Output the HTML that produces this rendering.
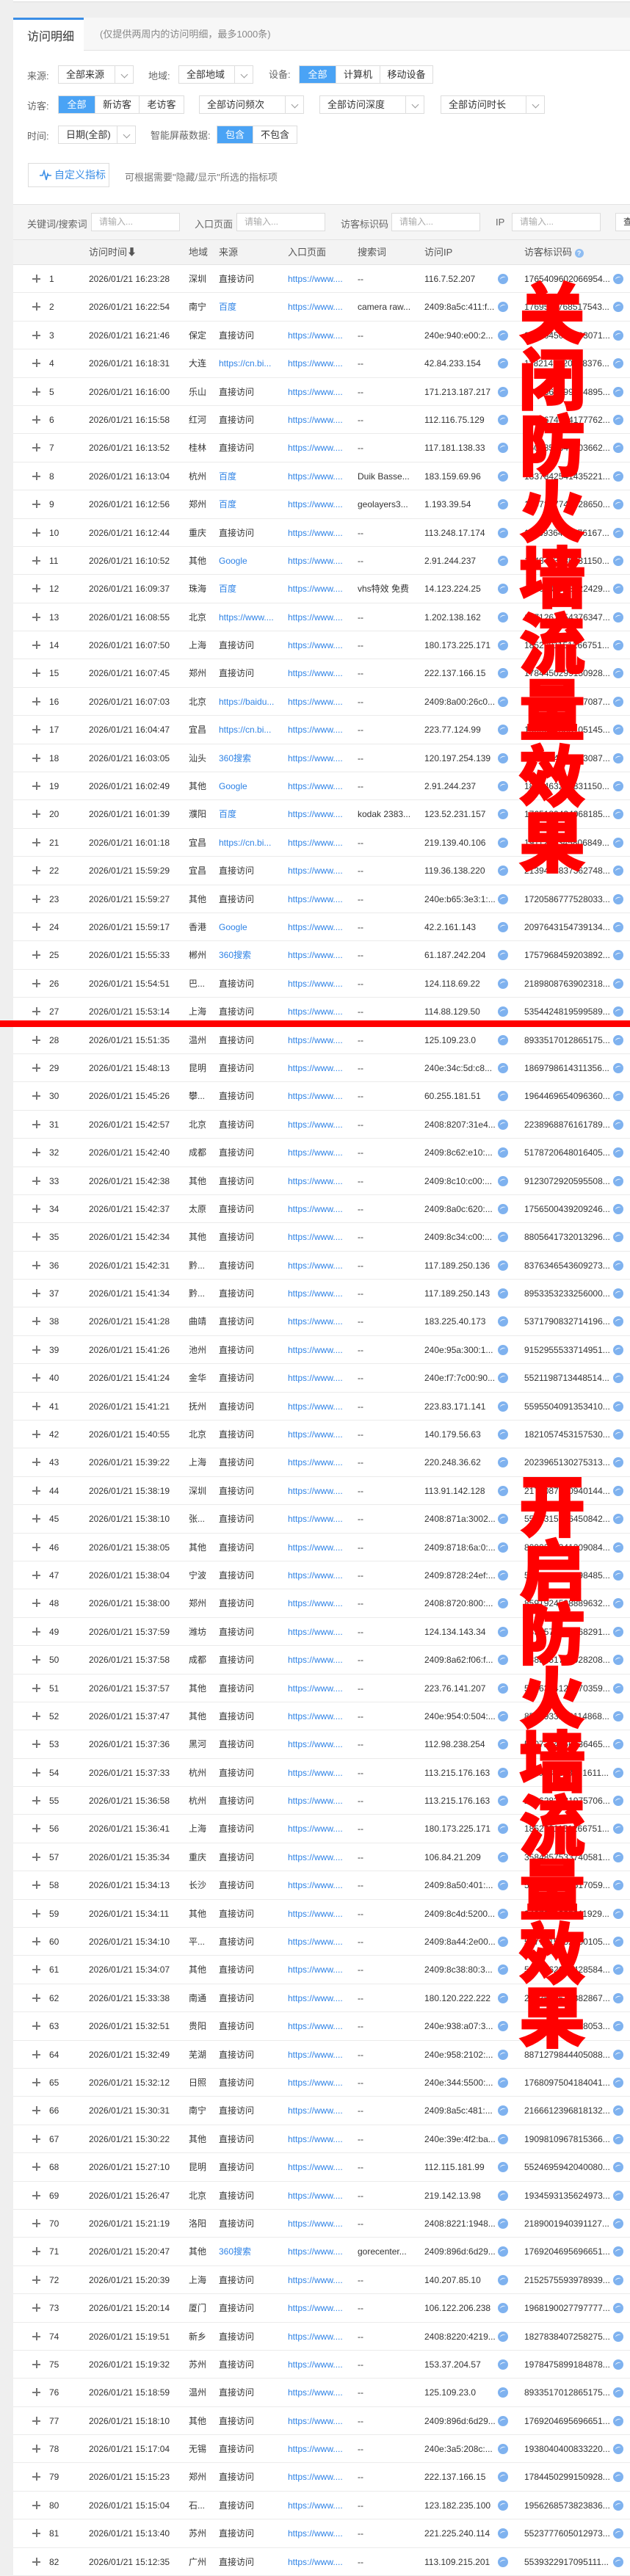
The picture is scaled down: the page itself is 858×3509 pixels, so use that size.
<!DOCTYPE html>
<html><head><meta charset="utf-8">
<style>
*{margin:0;padding:0;box-sizing:border-box}
body{width:858px;height:3497px;overflow:hidden;background:#efefef;font-family:"Liberation Sans","Noto Sans CJK SC",sans-serif;font-size:12px;color:#333;position:relative}
.abs{position:absolute}
.top{left:18px;top:0;width:840px;height:3px;background:#fff;border-bottom:1px solid #ddd}
.tabbar{left:18px;top:24px;width:840px;height:45px;background:#f7f7f7;border-bottom:1px solid #e3e3e3}
.tab{left:18px;top:24px;width:96px;height:45px;background:#fff;border-top:3px solid #3a8ee6;font-size:16px;color:#333;padding:9px 0 0 19px}
.tabnote{left:136px;top:24px;line-height:45px;color:#888;font-size:13px}
.panel{left:18px;top:69px;width:840px;height:210px;background:#fff;border-bottom:1px solid #e3e3e3}
.lbl{color:#666;font-size:13px}
.sel{height:25px;border:1px solid #ddd;background:#fff;font-size:13px;line-height:23px;padding-left:10px;color:#333}
.sel:after{content:"";position:absolute;right:0;top:0;width:24px;height:23px;border-left:1px solid #ddd;background:linear-gradient(#fff,#fff)}
.arr{position:absolute;right:8px;top:8px;width:7px;height:7px;border-right:1px solid #999;border-bottom:1px solid #999;transform:rotate(45deg);z-index:2}
.grp{height:25px;border:1px solid #ddd;background:#fff;display:flex;font-size:13px;line-height:23px}
.grp span{text-align:center;border-right:1px solid #ddd}
.grp span:last-child{border-right:0}
.grp .on{background:#4aa3f5;color:#fff}
.btn{left:38px;top:222px;width:111px;height:33px;border:1px solid #ddd;background:#fff;color:#3a8ee6;font-size:14px;line-height:31px;padding-left:35px}
.srch{left:18px;top:279px;width:840px;height:48px;background:#f5f5f5;border-bottom:1px solid #e3e3e3}
.inp{height:25px;border:1px solid #ddd;background:#fff;color:#aaa;font-size:12px;line-height:23px;padding-left:10px;width:121px}
.head{left:18px;top:327px;width:840px;height:34px;background:#f3f3f3;border-bottom:1px solid #e3e3e3}
.head span{position:absolute;top:0;line-height:34px;font-size:13px;color:#555}
.rows{left:18px;top:361px;width:840px;background:#fff}
.r{position:relative;height:38.4px;border-bottom:1px solid #ebebeb}
.r>*{position:absolute;top:0;line-height:38px;white-space:nowrap}
xp{left:26px;top:13px!important;width:11px;height:11px}
xp:before{content:"";position:absolute;left:0;top:5px;width:11px;height:2px;background:#777}
xp:after{content:"";position:absolute;left:5px;top:0;width:2px;height:11px;background:#777}
xn{left:49px}
xd{left:103px}
xg{left:239px}
xs{left:280px}
xs.b{color:#2f83e6}
xe{left:374px;color:#2f83e6}
xk{left:469px}
xi{left:560px}
xc,xy{top:12px!important;width:14px;height:14px;border-radius:50%;background:#7fb2ef}
xc{left:660px}
xy{left:817px}
xc:after,xy:after{content:"";position:absolute;left:3px;top:4px;width:8px;height:4px;border-top:1.5px solid #fff;border-radius:50% 50% 0 0;transform:rotate(-20deg)}
xv{left:696px}
.red{background:#ff0000;left:0;top:1390px;width:858px;height:9px}
.big{color:#ff0000;font-family:"Noto Sans CJK SC","WenQuanYi Zen Hei",sans-serif;font-weight:900;font-size:90px;width:92px;text-align:center;-webkit-text-stroke:2px #ff0000}
</style></head><body>
<div class="abs top"></div>
<div class="abs tabbar"></div>
<div class="abs tab">访问明细</div>
<div class="abs tabnote">(仅提供两周内的访问明细，最多1000条)</div>
<div class="abs panel"></div>

<div class="abs lbl" style="left:37px;top:93px">来源:</div>
<div class="abs sel" style="left:79px;top:89px;width:103px">全部来源<i class="arr"></i></div>
<div class="abs lbl" style="left:202px;top:93px">地域:</div>
<div class="abs sel" style="left:243px;top:89px;width:102px">全部地域<i class="arr"></i></div>
<div class="abs lbl" style="left:366px;top:91px">设备:</div>
<div class="abs grp" style="left:407px;top:89px;width:183px"><span class="on" style="width:50px">全部</span><span style="width:60px">计算机</span><span style="width:71px">移动设备</span></div>

<div class="abs lbl" style="left:37px;top:134px">访客:</div>
<div class="abs grp" style="left:79px;top:130px;width:172px"><span class="on" style="width:50px">全部</span><span style="width:60px">新访客</span><span style="width:60px">老访客</span></div>
<div class="abs sel" style="left:271px;top:130px;width:143px">全部访问频次<i class="arr"></i></div>
<div class="abs sel" style="left:435px;top:130px;width:143px">全部访问深度<i class="arr"></i></div>
<div class="abs sel" style="left:600px;top:130px;width:142px">全部访问时长<i class="arr"></i></div>

<div class="abs lbl" style="left:37px;top:175px">时间:</div>
<div class="abs sel" style="left:79px;top:171px;width:106px">日期(全部)<i class="arr"></i></div>
<div class="abs lbl" style="left:205px;top:174px">智能屏蔽数据:</div>
<div class="abs grp" style="left:295px;top:171px;width:110px"><span class="on" style="width:49px">包含</span><span style="width:59px">不包含</span></div>

<div class="abs btn"><svg class="abs" style="left:15px;top:8px" width="16" height="16" viewBox="0 0 16 16"><path d="M0 8h4l2-6 3 12 2-8 1 2h4" fill="none" stroke="#3a8ee6" stroke-width="1.6"/></svg>自定义指标</div>
<div class="abs" style="left:170px;top:231px;color:#777;font-size:13px">可根据需要"隐藏/显示"所选的指标项</div>

<div class="abs srch"></div>
<div class="abs lbl" style="left:37px;top:295px">关键词/搜索词</div>
<div class="abs inp" style="left:124px;top:290px">请输入...</div>
<div class="abs lbl" style="left:265px;top:295px">入口页面</div>
<div class="abs inp" style="left:322px;top:290px">请输入...</div>
<div class="abs lbl" style="left:464px;top:295px">访客标识码</div>
<div class="abs inp" style="left:533px;top:290px">请输入...</div>
<div class="abs lbl" style="left:675px;top:295px">IP</div>
<div class="abs inp" style="left:697px;top:290px">请输入...</div>
<div class="abs inp" style="left:838px;top:290px;width:40px;color:#333">查</div>

<div class="abs head">
<span style="left:103px">访问时间⬇</span><span style="left:239px">地域</span><span style="left:280px">来源</span><span style="left:374px">入口页面</span><span style="left:469px">搜索词</span><span style="left:560px">访问IP</span><span style="left:696px">访客标识码 <b style="display:inline-block;width:12px;height:12px;border-radius:50%;background:#8fbdf2;color:#fff;font-size:9px;line-height:12px;text-align:center;vertical-align:middle">?</b></span>
</div>

<div class="abs rows">
<div class="r"><xp></xp><xn>1</xn><xd>2026/01/21 16:23:28</xd><xg>深圳</xg><xs>直接访问</xs><xe>https://www....</xe><xk>--</xk><xi>116.7.52.207</xi><xc></xc><xv>1765409602066954...</xv><xy></xy></div>
<div class="r"><xp></xp><xn>2</xn><xd>2026/01/21 16:22:54</xd><xg>南宁</xg><xs class="b">百度</xs><xe>https://www....</xe><xk>camera raw...</xk><xi>2409:8a5c:411:f...</xi><xc></xc><xv>1769511768517543...</xv><xy></xy></div>
<div class="r"><xp></xp><xn>3</xn><xd>2026/01/21 16:21:46</xd><xg>保定</xg><xs>直接访问</xs><xe>https://www....</xe><xk>--</xk><xi>240e:940:e00:2...</xi><xc></xc><xv>2143045062493071...</xv><xy></xy></div>
<div class="r"><xp></xp><xn>4</xn><xd>2026/01/21 16:18:31</xd><xg>大连</xg><xs class="b">https://cn.bi...</xs><xe>https://www....</xe><xk>--</xk><xi>42.84.233.154</xi><xc></xc><xv>1182149420248376...</xv><xy></xy></div>
<div class="r"><xp></xp><xn>5</xn><xd>2026/01/21 16:16:00</xd><xg>乐山</xg><xs>直接访问</xs><xe>https://www....</xe><xk>--</xk><xi>171.213.187.217</xi><xc></xc><xv>1726361699034895...</xv><xy></xy></div>
<div class="r"><xp></xp><xn>6</xn><xd>2026/01/21 16:15:58</xd><xg>红河</xg><xs>直接访问</xs><xe>https://www....</xe><xk>--</xk><xi>112.116.75.129</xi><xc></xc><xv>5962674104177762...</xv><xy></xy></div>
<div class="r"><xp></xp><xn>7</xn><xd>2026/01/21 16:13:52</xd><xg>桂林</xg><xs>直接访问</xs><xe>https://www....</xe><xk>--</xk><xi>117.181.138.33</xi><xc></xc><xv>4604850643203662...</xv><xy></xy></div>
<div class="r"><xp></xp><xn>8</xn><xd>2026/01/21 16:13:04</xd><xg>杭州</xg><xs class="b">百度</xs><xe>https://www....</xe><xk>Duik Basse...</xk><xi>183.159.69.96</xi><xc></xc><xv>1837842541435221...</xv><xy></xy></div>
<div class="r"><xp></xp><xn>9</xn><xd>2026/01/21 16:12:56</xd><xg>郑州</xg><xs class="b">百度</xs><xe>https://www....</xe><xk>geolayers3...</xk><xi>1.193.39.54</xi><xc></xc><xv>1997217747328650...</xv><xy></xy></div>
<div class="r"><xp></xp><xn>10</xn><xd>2026/01/21 16:12:44</xd><xg>重庆</xg><xs>直接访问</xs><xe>https://www....</xe><xk>--</xk><xi>113.248.17.174</xi><xc></xc><xv>1196936434576167...</xv><xy></xy></div>
<div class="r"><xp></xp><xn>11</xn><xd>2026/01/21 16:10:52</xd><xg>其他</xg><xs class="b">Google</xs><xe>https://www....</xe><xk>--</xk><xi>2.91.244.237</xi><xc></xc><xv>1848463230831150...</xv><xy></xy></div>
<div class="r"><xp></xp><xn>12</xn><xd>2026/01/21 16:09:37</xd><xg>珠海</xg><xs class="b">百度</xs><xe>https://www....</xe><xk>vhs特效 免费</xk><xi>14.123.224.25</xi><xc></xc><xv>1690305538422429...</xv><xy></xy></div>
<div class="r"><xp></xp><xn>13</xn><xd>2026/01/21 16:08:55</xd><xg>北京</xg><xs class="b">https://www....</xs><xe>https://www....</xe><xk>--</xk><xi>1.202.138.162</xi><xc></xc><xv>1871267354376347...</xv><xy></xy></div>
<div class="r"><xp></xp><xn>14</xn><xd>2026/01/21 16:07:50</xd><xg>上海</xg><xs>直接访问</xs><xe>https://www....</xe><xk>--</xk><xi>180.173.225.171</xi><xc></xc><xv>1852281151266751...</xv><xy></xy></div>
<div class="r"><xp></xp><xn>15</xn><xd>2026/01/21 16:07:45</xd><xg>郑州</xg><xs>直接访问</xs><xe>https://www....</xe><xk>--</xk><xi>222.137.166.15</xi><xc></xc><xv>1784450299150928...</xv><xy></xy></div>
<div class="r"><xp></xp><xn>16</xn><xd>2026/01/21 16:07:03</xd><xg>北京</xg><xs class="b">https://baidu...</xs><xe>https://www....</xe><xk>--</xk><xi>2409:8a00:26c0...</xi><xc></xc><xv>5022613460617087...</xv><xy></xy></div>
<div class="r"><xp></xp><xn>17</xn><xd>2026/01/21 16:04:47</xd><xg>宜昌</xg><xs class="b">https://cn.bi...</xs><xe>https://www....</xe><xk>--</xk><xi>223.77.124.99</xi><xc></xc><xv>1900232838105145...</xv><xy></xy></div>
<div class="r"><xp></xp><xn>18</xn><xd>2026/01/21 16:03:05</xd><xg>汕头</xg><xs class="b">360搜索</xs><xe>https://www....</xe><xk>--</xk><xi>120.197.254.139</xi><xc></xc><xv>1250454187203087...</xv><xy></xy></div>
<div class="r"><xp></xp><xn>19</xn><xd>2026/01/21 16:02:49</xd><xg>其他</xg><xs class="b">Google</xs><xe>https://www....</xe><xk>--</xk><xi>2.91.244.237</xi><xc></xc><xv>1848463230831150...</xv><xy></xy></div>
<div class="r"><xp></xp><xn>20</xn><xd>2026/01/21 16:01:39</xd><xg>濮阳</xg><xs class="b">百度</xs><xe>https://www....</xe><xk>kodak 2383...</xk><xi>123.52.231.157</xi><xc></xc><xv>1765180424068185...</xv><xy></xy></div>
<div class="r"><xp></xp><xn>21</xn><xd>2026/01/21 16:01:18</xd><xg>宜昌</xg><xs class="b">https://cn.bi...</xs><xe>https://www....</xe><xk>--</xk><xi>219.139.40.106</xi><xc></xc><xv>1911264345806849...</xv><xy></xy></div>
<div class="r"><xp></xp><xn>22</xn><xd>2026/01/21 15:59:29</xd><xg>宜昌</xg><xs>直接访问</xs><xe>https://www....</xe><xk>--</xk><xi>119.36.138.220</xi><xc></xc><xv>2139406837362748...</xv><xy></xy></div>
<div class="r"><xp></xp><xn>23</xn><xd>2026/01/21 15:59:27</xd><xg>其他</xg><xs>直接访问</xs><xe>https://www....</xe><xk>--</xk><xi>240e:b65:3e3:1:...</xi><xc></xc><xv>1720586777528033...</xv><xy></xy></div>
<div class="r"><xp></xp><xn>24</xn><xd>2026/01/21 15:59:17</xd><xg>香港</xg><xs class="b">Google</xs><xe>https://www....</xe><xk>--</xk><xi>42.2.161.143</xi><xc></xc><xv>2097643154739134...</xv><xy></xy></div>
<div class="r"><xp></xp><xn>25</xn><xd>2026/01/21 15:55:33</xd><xg>郴州</xg><xs class="b">360搜索</xs><xe>https://www....</xe><xk>--</xk><xi>61.187.242.204</xi><xc></xc><xv>1757968459203892...</xv><xy></xy></div>
<div class="r"><xp></xp><xn>26</xn><xd>2026/01/21 15:54:51</xd><xg>巴...</xg><xs>直接访问</xs><xe>https://www....</xe><xk>--</xk><xi>124.118.69.22</xi><xc></xc><xv>2189808763902318...</xv><xy></xy></div>
<div class="r"><xp></xp><xn>27</xn><xd>2026/01/21 15:53:14</xd><xg>上海</xg><xs>直接访问</xs><xe>https://www....</xe><xk>--</xk><xi>114.88.129.50</xi><xc></xc><xv>5354424819599589...</xv><xy></xy></div>
<div class="r"><xp></xp><xn>28</xn><xd>2026/01/21 15:51:35</xd><xg>温州</xg><xs>直接访问</xs><xe>https://www....</xe><xk>--</xk><xi>125.109.23.0</xi><xc></xc><xv>8933517012865175...</xv><xy></xy></div>
<div class="r"><xp></xp><xn>29</xn><xd>2026/01/21 15:48:13</xd><xg>昆明</xg><xs>直接访问</xs><xe>https://www....</xe><xk>--</xk><xi>240e:34c:5d:c8...</xi><xc></xc><xv>1869798614311356...</xv><xy></xy></div>
<div class="r"><xp></xp><xn>30</xn><xd>2026/01/21 15:45:26</xd><xg>攀...</xg><xs>直接访问</xs><xe>https://www....</xe><xk>--</xk><xi>60.255.181.51</xi><xc></xc><xv>1964469654096360...</xv><xy></xy></div>
<div class="r"><xp></xp><xn>31</xn><xd>2026/01/21 15:42:57</xd><xg>北京</xg><xs>直接访问</xs><xe>https://www....</xe><xk>--</xk><xi>2408:8207:31e4...</xi><xc></xc><xv>2238968876161789...</xv><xy></xy></div>
<div class="r"><xp></xp><xn>32</xn><xd>2026/01/21 15:42:40</xd><xg>成都</xg><xs>直接访问</xs><xe>https://www....</xe><xk>--</xk><xi>2409:8c62:e10:...</xi><xc></xc><xv>5178720648016405...</xv><xy></xy></div>
<div class="r"><xp></xp><xn>33</xn><xd>2026/01/21 15:42:38</xd><xg>其他</xg><xs>直接访问</xs><xe>https://www....</xe><xk>--</xk><xi>2409:8c10:c00:...</xi><xc></xc><xv>9123072920595508...</xv><xy></xy></div>
<div class="r"><xp></xp><xn>34</xn><xd>2026/01/21 15:42:37</xd><xg>太原</xg><xs>直接访问</xs><xe>https://www....</xe><xk>--</xk><xi>2409:8a0c:620:...</xi><xc></xc><xv>1756500439209246...</xv><xy></xy></div>
<div class="r"><xp></xp><xn>35</xn><xd>2026/01/21 15:42:34</xd><xg>其他</xg><xs>直接访问</xs><xe>https://www....</xe><xk>--</xk><xi>2409:8c34:c00:...</xi><xc></xc><xv>8805641732013296...</xv><xy></xy></div>
<div class="r"><xp></xp><xn>36</xn><xd>2026/01/21 15:42:31</xd><xg>黔...</xg><xs>直接访问</xs><xe>https://www....</xe><xk>--</xk><xi>117.189.250.136</xi><xc></xc><xv>8376346543609273...</xv><xy></xy></div>
<div class="r"><xp></xp><xn>37</xn><xd>2026/01/21 15:41:34</xd><xg>黔...</xg><xs>直接访问</xs><xe>https://www....</xe><xk>--</xk><xi>117.189.250.143</xi><xc></xc><xv>8953353233256000...</xv><xy></xy></div>
<div class="r"><xp></xp><xn>38</xn><xd>2026/01/21 15:41:28</xd><xg>曲靖</xg><xs>直接访问</xs><xe>https://www....</xe><xk>--</xk><xi>183.225.40.173</xi><xc></xc><xv>5371790832714196...</xv><xy></xy></div>
<div class="r"><xp></xp><xn>39</xn><xd>2026/01/21 15:41:26</xd><xg>池州</xg><xs>直接访问</xs><xe>https://www....</xe><xk>--</xk><xi>240e:95a:300:1...</xi><xc></xc><xv>9152955533714951...</xv><xy></xy></div>
<div class="r"><xp></xp><xn>40</xn><xd>2026/01/21 15:41:24</xd><xg>金华</xg><xs>直接访问</xs><xe>https://www....</xe><xk>--</xk><xi>240e:f7:7c00:90...</xi><xc></xc><xv>5521198713448514...</xv><xy></xy></div>
<div class="r"><xp></xp><xn>41</xn><xd>2026/01/21 15:41:21</xd><xg>抚州</xg><xs>直接访问</xs><xe>https://www....</xe><xk>--</xk><xi>223.83.171.141</xi><xc></xc><xv>5595504091353410...</xv><xy></xy></div>
<div class="r"><xp></xp><xn>42</xn><xd>2026/01/21 15:40:55</xd><xg>北京</xg><xs>直接访问</xs><xe>https://www....</xe><xk>--</xk><xi>140.179.56.63</xi><xc></xc><xv>1821057453157530...</xv><xy></xy></div>
<div class="r"><xp></xp><xn>43</xn><xd>2026/01/21 15:39:22</xd><xg>上海</xg><xs>直接访问</xs><xe>https://www....</xe><xk>--</xk><xi>220.248.36.62</xi><xc></xc><xv>2023965130275313...</xv><xy></xy></div>
<div class="r"><xp></xp><xn>44</xn><xd>2026/01/21 15:38:19</xd><xg>深圳</xg><xs>直接访问</xs><xe>https://www....</xe><xk>--</xk><xi>113.91.142.128</xi><xc></xc><xv>2170087620940144...</xv><xy></xy></div>
<div class="r"><xp></xp><xn>45</xn><xd>2026/01/21 15:38:10</xd><xg>张...</xg><xs>直接访问</xs><xe>https://www....</xe><xk>--</xk><xi>2408:871a:3002...</xi><xc></xc><xv>5513315906450842...</xv><xy></xy></div>
<div class="r"><xp></xp><xn>46</xn><xd>2026/01/21 15:38:05</xd><xg>其他</xg><xs>直接访问</xs><xe>https://www....</xe><xk>--</xk><xi>2409:8718:6a:0:...</xi><xc></xc><xv>8090214341209084...</xv><xy></xy></div>
<div class="r"><xp></xp><xn>47</xn><xd>2026/01/21 15:38:04</xd><xg>宁波</xg><xs>直接访问</xs><xe>https://www....</xe><xk>--</xk><xi>2409:8728:24ef:...</xi><xc></xc><xv>5552764538298485...</xv><xy></xy></div>
<div class="r"><xp></xp><xn>48</xn><xd>2026/01/21 15:38:00</xd><xg>郑州</xg><xs>直接访问</xs><xe>https://www....</xe><xk>--</xk><xi>2408:8720:800:...</xi><xc></xc><xv>8591924588889632...</xv><xy></xy></div>
<div class="r"><xp></xp><xn>49</xn><xd>2026/01/21 15:37:59</xd><xg>潍坊</xg><xs>直接访问</xs><xe>https://www....</xe><xk>--</xk><xi>124.134.143.34</xi><xc></xc><xv>1850572168268291...</xv><xy></xy></div>
<div class="r"><xp></xp><xn>50</xn><xd>2026/01/21 15:37:58</xd><xg>成都</xg><xs>直接访问</xs><xe>https://www....</xe><xk>--</xk><xi>2409:8a62:f06:f...</xi><xc></xc><xv>1385551705028208...</xv><xy></xy></div>
<div class="r"><xp></xp><xn>51</xn><xd>2026/01/21 15:37:57</xd><xg>其他</xg><xs>直接访问</xs><xe>https://www....</xe><xk>--</xk><xi>223.76.141.207</xi><xc></xc><xv>5196304127470359...</xv><xy></xy></div>
<div class="r"><xp></xp><xn>52</xn><xd>2026/01/21 15:37:47</xd><xg>其他</xg><xs>直接访问</xs><xe>https://www....</xe><xk>--</xk><xi>240e:954:0:504:...</xi><xc></xc><xv>8529933102114868...</xv><xy></xy></div>
<div class="r"><xp></xp><xn>53</xn><xd>2026/01/21 15:37:36</xd><xg>黑河</xg><xs>直接访问</xs><xe>https://www....</xe><xk>--</xk><xi>112.98.238.254</xi><xc></xc><xv>5507244566836465...</xv><xy></xy></div>
<div class="r"><xp></xp><xn>54</xn><xd>2026/01/21 15:37:33</xd><xg>杭州</xg><xs>直接访问</xs><xe>https://www....</xe><xk>--</xk><xi>113.215.176.163</xi><xc></xc><xv>1160234208531611...</xv><xy></xy></div>
<div class="r"><xp></xp><xn>55</xn><xd>2026/01/21 15:36:58</xd><xg>杭州</xg><xs>直接访问</xs><xe>https://www....</xe><xk>--</xk><xi>113.215.176.163</xi><xc></xc><xv>2066282831975706...</xv><xy></xy></div>
<div class="r"><xp></xp><xn>56</xn><xd>2026/01/21 15:36:41</xd><xg>上海</xg><xs>直接访问</xs><xe>https://www....</xe><xk>--</xk><xi>180.173.225.171</xi><xc></xc><xv>1852281151266751...</xv><xy></xy></div>
<div class="r"><xp></xp><xn>57</xn><xd>2026/01/21 15:35:34</xd><xg>重庆</xg><xs>直接访问</xs><xe>https://www....</xe><xk>--</xk><xi>106.84.21.209</xi><xc></xc><xv>3584857533740581...</xv><xy></xy></div>
<div class="r"><xp></xp><xn>58</xn><xd>2026/01/21 15:34:13</xd><xg>长沙</xg><xs>直接访问</xs><xe>https://www....</xe><xk>--</xk><xi>2409:8a50:401:...</xi><xc></xc><xv>5380310598517059...</xv><xy></xy></div>
<div class="r"><xp></xp><xn>59</xn><xd>2026/01/21 15:34:11</xd><xg>其他</xg><xs>直接访问</xs><xe>https://www....</xe><xk>--</xk><xi>2409:8c4d:5200...</xi><xc></xc><xv>9407041335011929...</xv><xy></xy></div>
<div class="r"><xp></xp><xn>60</xn><xd>2026/01/21 15:34:10</xd><xg>平...</xg><xs>直接访问</xs><xe>https://www....</xe><xk>--</xk><xi>2409:8a44:2e00...</xi><xc></xc><xv>5477315132960105...</xv><xy></xy></div>
<div class="r"><xp></xp><xn>61</xn><xd>2026/01/21 15:34:07</xd><xg>其他</xg><xs>直接访问</xs><xe>https://www....</xe><xk>--</xk><xi>2409:8c38:80:3...</xi><xc></xc><xv>5350062047428584...</xv><xy></xy></div>
<div class="r"><xp></xp><xn>62</xn><xd>2026/01/21 15:33:38</xd><xg>南通</xg><xs>直接访问</xs><xe>https://www....</xe><xk>--</xk><xi>180.120.222.222</xi><xc></xc><xv>2213664539382867...</xv><xy></xy></div>
<div class="r"><xp></xp><xn>63</xn><xd>2026/01/21 15:32:51</xd><xg>贵阳</xg><xs>直接访问</xs><xe>https://www....</xe><xk>--</xk><xi>240e:938:a07:3...</xi><xc></xc><xv>8207461767668053...</xv><xy></xy></div>
<div class="r"><xp></xp><xn>64</xn><xd>2026/01/21 15:32:49</xd><xg>芜湖</xg><xs>直接访问</xs><xe>https://www....</xe><xk>--</xk><xi>240e:958:2102:...</xi><xc></xc><xv>8871279844405088...</xv><xy></xy></div>
<div class="r"><xp></xp><xn>65</xn><xd>2026/01/21 15:32:12</xd><xg>日照</xg><xs>直接访问</xs><xe>https://www....</xe><xk>--</xk><xi>240e:344:5500:...</xi><xc></xc><xv>1768097504184041...</xv><xy></xy></div>
<div class="r"><xp></xp><xn>66</xn><xd>2026/01/21 15:30:31</xd><xg>南宁</xg><xs>直接访问</xs><xe>https://www....</xe><xk>--</xk><xi>2409:8a5c:481:...</xi><xc></xc><xv>2166612396818132...</xv><xy></xy></div>
<div class="r"><xp></xp><xn>67</xn><xd>2026/01/21 15:30:22</xd><xg>其他</xg><xs>直接访问</xs><xe>https://www....</xe><xk>--</xk><xi>240e:39e:4f2:ba...</xi><xc></xc><xv>1909810967815366...</xv><xy></xy></div>
<div class="r"><xp></xp><xn>68</xn><xd>2026/01/21 15:27:10</xd><xg>昆明</xg><xs>直接访问</xs><xe>https://www....</xe><xk>--</xk><xi>112.115.181.99</xi><xc></xc><xv>5524695942040080...</xv><xy></xy></div>
<div class="r"><xp></xp><xn>69</xn><xd>2026/01/21 15:26:47</xd><xg>北京</xg><xs>直接访问</xs><xe>https://www....</xe><xk>--</xk><xi>219.142.13.98</xi><xc></xc><xv>1934593135624973...</xv><xy></xy></div>
<div class="r"><xp></xp><xn>70</xn><xd>2026/01/21 15:21:19</xd><xg>洛阳</xg><xs>直接访问</xs><xe>https://www....</xe><xk>--</xk><xi>2408:8221:1948...</xi><xc></xc><xv>2189001940391127...</xv><xy></xy></div>
<div class="r"><xp></xp><xn>71</xn><xd>2026/01/21 15:20:47</xd><xg>其他</xg><xs class="b">360搜索</xs><xe>https://www....</xe><xk>gorecenter...</xk><xi>2409:896d:6d29...</xi><xc></xc><xv>1769204695696651...</xv><xy></xy></div>
<div class="r"><xp></xp><xn>72</xn><xd>2026/01/21 15:20:39</xd><xg>上海</xg><xs>直接访问</xs><xe>https://www....</xe><xk>--</xk><xi>140.207.85.10</xi><xc></xc><xv>2152575593978939...</xv><xy></xy></div>
<div class="r"><xp></xp><xn>73</xn><xd>2026/01/21 15:20:14</xd><xg>厦门</xg><xs>直接访问</xs><xe>https://www....</xe><xk>--</xk><xi>106.122.206.238</xi><xc></xc><xv>1968190027797777...</xv><xy></xy></div>
<div class="r"><xp></xp><xn>74</xn><xd>2026/01/21 15:19:51</xd><xg>新乡</xg><xs>直接访问</xs><xe>https://www....</xe><xk>--</xk><xi>2408:8220:4219...</xi><xc></xc><xv>1827838407258275...</xv><xy></xy></div>
<div class="r"><xp></xp><xn>75</xn><xd>2026/01/21 15:19:32</xd><xg>苏州</xg><xs>直接访问</xs><xe>https://www....</xe><xk>--</xk><xi>153.37.204.57</xi><xc></xc><xv>1978475899184878...</xv><xy></xy></div>
<div class="r"><xp></xp><xn>76</xn><xd>2026/01/21 15:18:59</xd><xg>温州</xg><xs>直接访问</xs><xe>https://www....</xe><xk>--</xk><xi>125.109.23.0</xi><xc></xc><xv>8933517012865175...</xv><xy></xy></div>
<div class="r"><xp></xp><xn>77</xn><xd>2026/01/21 15:18:10</xd><xg>其他</xg><xs>直接访问</xs><xe>https://www....</xe><xk>--</xk><xi>2409:896d:6d29...</xi><xc></xc><xv>1769204695696651...</xv><xy></xy></div>
<div class="r"><xp></xp><xn>78</xn><xd>2026/01/21 15:17:04</xd><xg>无锡</xg><xs>直接访问</xs><xe>https://www....</xe><xk>--</xk><xi>240e:3a5:208c:...</xi><xc></xc><xv>1938040400833220...</xv><xy></xy></div>
<div class="r"><xp></xp><xn>79</xn><xd>2026/01/21 15:15:23</xd><xg>郑州</xg><xs>直接访问</xs><xe>https://www....</xe><xk>--</xk><xi>222.137.166.15</xi><xc></xc><xv>1784450299150928...</xv><xy></xy></div>
<div class="r"><xp></xp><xn>80</xn><xd>2026/01/21 15:15:04</xd><xg>石...</xg><xs>直接访问</xs><xe>https://www....</xe><xk>--</xk><xi>123.182.235.100</xi><xc></xc><xv>1956268573823836...</xv><xy></xy></div>
<div class="r"><xp></xp><xn>81</xn><xd>2026/01/21 15:13:40</xd><xg>苏州</xg><xs>直接访问</xs><xe>https://www....</xe><xk>--</xk><xi>221.225.240.114</xi><xc></xc><xv>5523777605012973...</xv><xy></xy></div>
<div class="r"><xp></xp><xn>82</xn><xd>2026/01/21 15:12:35</xd><xg>广州</xg><xs>直接访问</xs><xe>https://www....</xe><xk>--</xk><xi>113.109.215.201</xi><xc></xc><xv>5539322917095111...</xv><xy></xy></div>
</div>

<div class="abs red"></div>
<div class="abs big" style="left:706px;top:376px;line-height:90px">关<br>闭<br>防<br>火<br>墙<br>流<br>量<br>效<br>果</div>
<div class="abs big" style="left:706px;top:2003px;line-height:87px">开<br>启<br>防<br>火<br>墙<br>流<br>量<br>效<br>果</div>
</body></html>
